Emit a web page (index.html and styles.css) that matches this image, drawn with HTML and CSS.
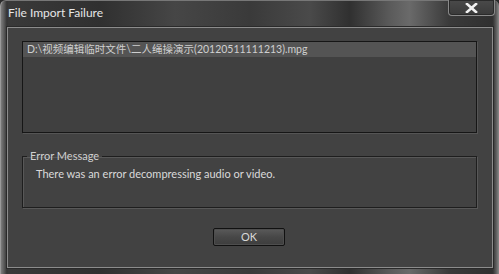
FILE: index.html
```html
<!DOCTYPE html>
<html>
<head>
<meta charset="utf-8">
<link rel="stylesheet" href="styles.css">
</head>
<body>
<div class="window">
  <div class="titlebar">
    <div class="title">File Import Failure</div>
    <div class="close"><svg width="13" height="10" viewBox="0 0 13 10"><path d="M2 1 L11 9 M11 1 L2 9" stroke="#f2f2f2" stroke-width="2.6" stroke-linecap="square"/></svg></div>
  </div>
  <div class="client">
    <div class="list">
      <div class="row">D:\视频编辑临时文件\二人绳操演示(20120511111213).mpg</div>
    </div>
    <fieldset class="group">
      <legend class="legend">Error Message</legend>
      <div class="message">There was an error decompressing audio or video.</div>
    </fieldset>
    <div class="actions">
      <button class="btn">OK</button>
    </div>
  </div>
</div>
</body>
</html>
```

FILE: styles.css
```css
html, body {
  margin: 0;
  padding: 0;
  width: 499px;
  height: 274px;
  overflow: hidden;
  background: #2a2a2a;
}
.window {
  width: 499px;
  height: 274px;
  box-sizing: border-box;
  display: flex;
  flex-direction: column;
  border-left: 1px solid #9a9a9a;
  border-top: 1px solid #777;
  border-radius: 6px 6px 0 0;
  background:
    linear-gradient(90deg, #7c7c7c 0px, #5a5a5a 3px, #333 6px, transparent 7px),
    linear-gradient(270deg, #8a8a8a 0px, #5a5a5a 3px, #333 6px, transparent 7px),
    linear-gradient(90deg, #3a3a3a 0%, #303030 20%, #464646 35%, #3a3a3a 50%, #4a4a4a 62%, #303030 70%, #5a5a5a 78%, #6a6a6a 82%, #3a3a3a 90%, #2e2e2e 100%);
  font-family: Lato, "Noto Sans CJK SC", sans-serif;
}
.titlebar {
  height: 26px;
  display: flex;
  justify-content: space-between;
  align-items: flex-start;
  padding-left: 7px;
}
.title {
  margin-top: 4px;
  font-size: 12px;
  line-height: 16px;
  color: #e6e6e6;
}
.close {
  width: 45px;
  height: 15px;
  margin-right: 4px;
  margin-top: -1px;
  border: 1px solid #8a8a8a;
  border-top: none;
  border-radius: 0 0 4px 4px;
  background: linear-gradient(#4a4a4a, #3a3a3a);
  display: flex;
  align-items: center;
  justify-content: center;
  box-shadow: inset 0 0 0 1px #2a2a2a;
}
.client {
  flex: 1;
  margin: 0 6px 6px 6px;
  background: #424242;
  border: 1px solid #8c8c8c;
  box-shadow: 0 0 0 1px #2a2a2a;
  padding: 13px 15px 0 14px;
  display: flex;
  flex-direction: column;
}
.list {
  height: 90px;
  border: 1px solid #161616;
  box-shadow: 1px 1px 0 #555;
  background: #404040;
}
.row {
  height: 15px;
  background: #545454;
  color: #cfcfcf;
  font-size: 10.5px;
  line-height: 15px;
  padding-left: 4px;
  white-space: nowrap;
}
.group {
  margin: 16px 0 0 0;
  padding: 4px 0 0 13px;
  height: 53px;
  border: 1px solid #1e1e1e;
  box-shadow: 1px 1px 0 #585858, inset 1px 1px 0 #585858;
  min-width: 0;
}
.legend {
  margin-left: -9px;
  padding: 0 3px;
  font-size: 11px;
  line-height: 14px;
  color: #d0d0d0;
}
.message {
  font-size: 11px;
  line-height: 14px;
  color: #dadada;
}
.actions {
  display: flex;
  justify-content: center;
  margin-top: 20px;
}
.btn {
  width: 72px;
  height: 18px;
  margin-right: 1px;
  padding: 0;
  border: 1px solid #111;
  border-radius: 2px;
  background: linear-gradient(#5a5a5a, #474747 50%, #3d3d3d);
  box-shadow: inset 0 0 0 1px #4e4e4e;
  color: #d8d8d8;
  font-family: Lato, sans-serif;
  font-size: 11px;
  line-height: 14px;
}
```
